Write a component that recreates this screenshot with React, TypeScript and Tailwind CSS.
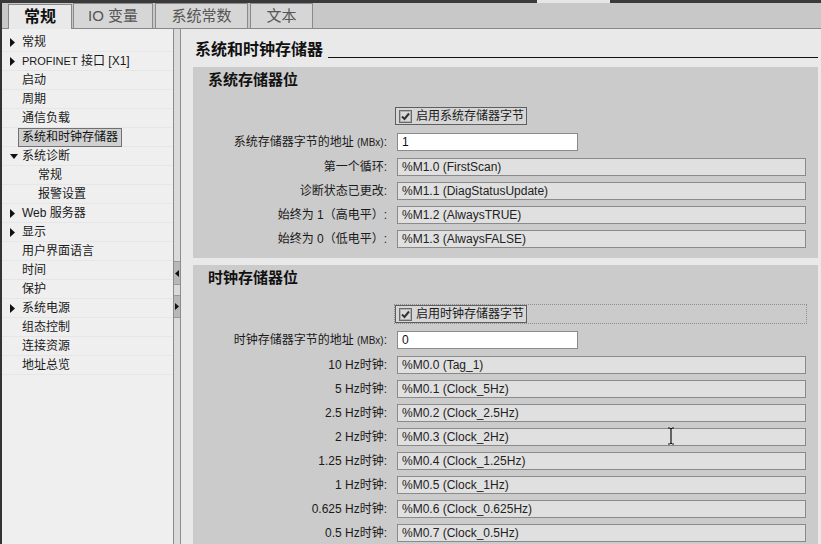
import React from 'react';

type NavItem = {
  label: string;
  arrow?: 'right' | 'down';
  indent?: boolean;
  selected?: boolean;
};

const navItems: NavItem[] = [
  { label: '常规', arrow: 'right' },
  { label: 'PROFINET 接口 [X1]', arrow: 'right' },
  { label: '启动' },
  { label: '周期' },
  { label: '通信负载' },
  { label: '系统和时钟存储器', selected: true },
  { label: '系统诊断', arrow: 'down' },
  { label: '常规', indent: true },
  { label: '报警设置', indent: true },
  { label: 'Web 服务器', arrow: 'right' },
  { label: '显示', arrow: 'right' },
  { label: '用户界面语言' },
  { label: '时间' },
  { label: '保护' },
  { label: '系统电源', arrow: 'right' },
  { label: '组态控制' },
  { label: '连接资源' },
  { label: '地址总览' },
];

const systemRows = [
  ['第一个循环:', '%M1.0 (FirstScan)'],
  ['诊断状态已更改:', '%M1.1 (DiagStatusUpdate)'],
  ['始终为 1（高电平）:', '%M1.2 (AlwaysTRUE)'],
  ['始终为 0（低电平）:', '%M1.3 (AlwaysFALSE)'],
];

const clockRows = [
  ['10 Hz时钟:', '%M0.0 (Tag_1)'],
  ['5 Hz时钟:', '%M0.1 (Clock_5Hz)'],
  ['2.5 Hz时钟:', '%M0.2 (Clock_2.5Hz)'],
  ['2 Hz时钟:', '%M0.3 (Clock_2Hz)'],
  ['1.25 Hz时钟:', '%M0.4 (Clock_1.25Hz)'],
  ['1 Hz时钟:', '%M0.5 (Clock_1Hz)'],
  ['0.625 Hz时钟:', '%M0.6 (Clock_0.625Hz)'],
  ['0.5 Hz时钟:', '%M0.7 (Clock_0.5Hz)'],
];

function Arrow({ dir }: { dir: 'right' | 'down' }) {
  if (dir === 'down') {
    return (
      <svg width="8" height="8" viewBox="0 0 8 8">
        <polygon points="0,2 8,2 4,7" fill="#111" />
      </svg>
    );
  }
  return (
    <svg width="6" height="9" viewBox="0 0 6 9">
      <polygon points="0,0 5,4.5 0,9" fill="#111" />
    </svg>
  );
}

function CheckBox() {
  return (
    <svg width="13" height="13" viewBox="0 0 13 13">
      <rect x="0.5" y="0.5" width="12" height="12" fill="#f2f2f2" stroke="#6a6a6a" />
      <rect x="1.5" y="1.5" width="10" height="10" fill="#dadada" stroke="#b0b0b0" />
      <path d="M3 6.5 L5.5 9 L10 3.5" fill="none" stroke="#333" strokeWidth="2" />
    </svg>
  );
}

function FieldRow({ label, value }: { label: string; value: string }) {
  return (
    <div className="flex h-[18px] items-center">
      <div className="w-[195px] pr-[1px] text-right text-[12px] leading-[18px] text-[#1a1a1a]">{label}</div>
      <div className="ml-[9px] h-[18px] w-[409px] border border-[#8a8a8a] bg-[#e0e0e0] pl-[4px] text-[12px] leading-[16px] text-[#222]">
        {value}
      </div>
    </div>
  );
}

function Section({
  title,
  checkLabel,
  addrLabel,
  addrValue,
  rows,
  focused,
  grow,
}: {
  title: string;
  checkLabel: string;
  addrLabel: string;
  addrValue: string;
  rows: string[][];
  focused?: boolean;
  grow?: boolean;
}) {
  const box = (
    <div className="flex h-[18px] w-[132px] items-center border border-[#5e5e5e] bg-[#d6d6d6] pl-[3px]">
      <CheckBox />
      <span className="ml-[4px] text-[12px] leading-[16px] text-[#1a1a1a]">{checkLabel}</span>
    </div>
  );
  return (
    <div className={`bg-[#cbcbcb] ${grow ? 'flex-1' : 'h-[191px]'}`}>
      <div className="h-[26px] pl-[15px] text-[15px] font-bold leading-[26px] text-[#111]">{title}</div>
      <div className="mt-[14px] flex h-[18px]">
        <div className="w-[202px]" />
        {focused ? (
          <div className="h-[18px] w-[411px] outline-1 outline-dotted outline-[#8f8f8f]">{box}</div>
        ) : (
          box
        )}
      </div>
      <div className="mt-[8px] flex h-[18px] items-center">
        <div className="w-[195px] pr-[1px] text-right text-[12px] leading-[18px] text-[#1a1a1a]">
          {addrLabel} <span className="text-[10px]">(MBx)</span>:
        </div>
        <div className="ml-[9px] h-[18px] w-[181px] border border-[#8a8a8a] bg-white pl-[4px] text-[12px] leading-[16px] text-[#111]">
          {addrValue}
        </div>
      </div>
      <div className="mt-[7px] flex flex-col gap-[6px]">
        {rows.map(([l, v]) => (
          <FieldRow key={v} label={l} value={v} />
        ))}
      </div>
    </div>
  );
}

export default function App() {
  return (
    <div className="relative flex h-[544px] w-[821px] flex-col overflow-hidden bg-[#e9e9e9] font-['Liberation_Sans','Noto_Sans_CJK_SC',sans-serif]">
      {/* top strip */}
      <div className="flex h-[3px] bg-[#3a3a3a]">
        <div className="w-[537px]" />
        <div className="w-[73px] bg-[#e6e6e6]" />
      </div>

      <div className="flex flex-1 flex-col border-l-2 border-[#333]">
        {/* tabs */}
        <div className="flex h-[26px] items-end border-b border-[#888] bg-[#c8c8c8] pl-[6px]">
          <div className="-mb-px flex h-[25px] w-[64px] items-center justify-center border-x border-t border-[#888] bg-[#e9e9e9] text-[16px] font-bold text-[#111]">
            常规
          </div>
          <div className="ml-[1px] flex h-[25px] w-[80px] items-center justify-center border-x border-t border-[#8a8a8a] bg-[#d6d6d6] text-[15px] text-[#555]">
            IO 变量
          </div>
          <div className="ml-[2px] flex h-[25px] w-[93px] items-center justify-center border-x border-t border-[#8a8a8a] bg-[#d6d6d6] text-[15px] text-[#555]">
            系统常数
          </div>
          <div className="ml-[2px] flex h-[25px] w-[63px] items-center justify-center border-x border-t border-[#8a8a8a] bg-[#d6d6d6] text-[15px] text-[#555]">
            文本
          </div>
        </div>

        <div className="flex flex-1">
          {/* sidebar */}
          <div className="w-[171px] bg-[#efefef] pt-[4px]">
            {navItems.map((item, i) => (
              <div key={i} className="flex h-[19px] items-center border-b border-[#e6e6e6] pl-[8px]">
                <div className="flex w-[8px] items-center">{item.arrow && <Arrow dir={item.arrow} />}</div>
                <span
                  className={`border px-[3px] text-[12px] leading-[17px] ${item.indent ? 'ml-[16px]' : ''} ${
                    item.selected ? 'border-[#707070] bg-[#d0d0d0] text-[#111]' : 'border-transparent text-[#1a1a1a]'
                  }`}
                >
                  {item.label.startsWith('PROFINET') ? (
                    <>
                      <span className="text-[11px]">PROFINET</span> 接口 [X1]
                    </>
                  ) : (
                    item.label
                  )}
                </span>
              </div>
            ))}
          </div>

          {/* splitter */}
          <div className="flex w-[8px] flex-col border-x border-[#8c8c8c] bg-[#dadada]">
            <div className="mt-[232px] flex h-[24px] items-center justify-center border-y border-[#9a9a9a] bg-[#b8b8b8]">
              <svg width="4" height="7" viewBox="0 0 4 7">
                <polygon points="4,0 0,3.5 4,7" fill="#111" />
              </svg>
            </div>
            <div className="mt-[10px] flex h-[23px] items-center justify-center border-y border-[#9a9a9a] bg-[#b8b8b8]">
              <svg width="4" height="7" viewBox="0 0 4 7">
                <polygon points="0,0 4,3.5 0,7" fill="#111" />
              </svg>
            </div>
          </div>

          {/* content */}
          <div className="flex flex-1 flex-col pl-[12px] pr-[3px]">
            <div className="flex h-[38px] items-start pt-[11px]">
              <div className="pl-[2px] text-[16px] font-bold leading-[20px] text-[#111]">系统和时钟存储器</div>
              <div className="ml-[5px] mt-[17px] h-px flex-1 bg-[#111]" />
            </div>
            <Section
              title="系统存储器位"
              checkLabel="启用系统存储器字节"
              addrLabel="系统存储器字节的地址"
              addrValue="1"
              rows={systemRows}
            />
            <div className="h-[7px]" />
            <Section
              title="时钟存储器位"
              checkLabel="启用时钟存储器字节"
              addrLabel="时钟存储器字节的地址"
              addrValue="0"
              rows={clockRows}
              focused
              grow
            />
          </div>
        </div>
      </div>

      {/* mouse cursor */}
      <svg className="absolute left-[666px] top-[427px]" width="10" height="18" viewBox="0 0 10 18">
        <path d="M2 1 H4 M6 1 H8 M5 1 V17 M2 17 H4 M6 17 H8 M4 1.5 H6 M4 16.5 H6" stroke="#111" strokeWidth="1.2" fill="none" />
      </svg>
    </div>
  );
}
